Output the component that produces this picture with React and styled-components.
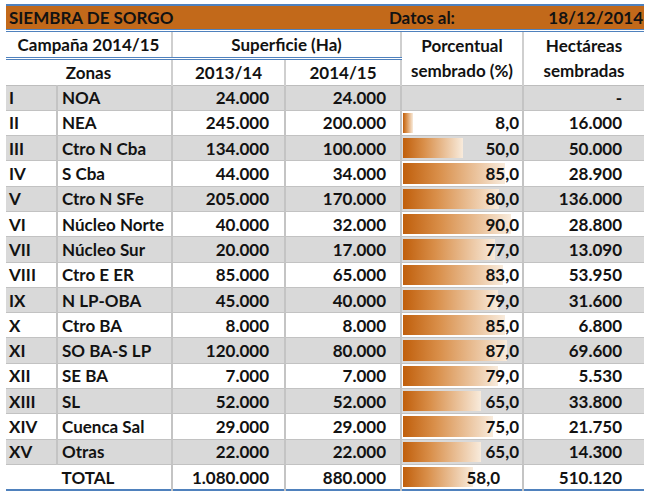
import React from 'react'
import styled, { createGlobalStyle } from 'styled-components'

const Global = createGlobalStyle`
body{
  margin:0;
  background:#fff;
  font-family:Lato, "Open Sans", sans-serif;
}
`

const rows = [
  ['I', 'NOA', '24.000', '24.000', null, '-'],
  ['II', 'NEA', '245.000', '200.000', 8, '16.000'],
  ['III', 'Ctro N Cba', '134.000', '100.000', 50, '50.000'],
  ['IV', 'S Cba', '44.000', '34.000', 85, '28.900'],
  ['V', 'Ctro N SFe', '205.000', '170.000', 80, '136.000'],
  ['VI', 'Núcleo Norte', '40.000', '32.000', 90, '28.800'],
  ['VII', 'Núcleo Sur', '20.000', '17.000', 77, '13.090'],
  ['VIII', 'Ctro E ER', '85.000', '65.000', 83, '53.950'],
  ['IX', 'N LP-OBA', '45.000', '40.000', 79, '31.600'],
  ['X', 'Ctro BA', '8.000', '8.000', 85, '6.800'],
  ['XI', 'SO BA-S LP', '120.000', '80.000', 87, '69.600'],
  ['XII', 'SE BA', '7.000', '7.000', 79, '5.530'],
  ['XIII', 'SL', '52.000', '52.000', 65, '33.800'],
  ['XIV', 'Cuenca Sal', '29.000', '29.000', 75, '21.750'],
  ['XV', 'Otras', '22.000', '22.000', 65, '14.300'],
]

const Wrap = styled.div`
  padding:4px 6px 0 6px;
`

const Table = styled.table`
  width:638px;
  table-layout:fixed;
  border-collapse:collapse;
  border-top:2px solid #4f81bd;
  border-bottom:2px solid #4f81bd;
  font-weight:700;
  font-size:17px;
  color:#121212;
`

const TitleRow = styled.tr`
  background:#c2691a;
  height:25px;
  border-bottom:3px double #4f81bd;
`

const TitleCell = styled.td`
  padding:0 ${p => p.$pr || '3px'} 0 3px;
  text-align:${p => (p.$right ? 'right' : 'left')};
  white-space:nowrap;
`

const HeadCell = styled.th`
  font-weight:700;
  text-align:center;
  line-height:25px;
  height:${p => (p.$tall ? '52px' : '25px')};
  padding:0;
  border-left:2px solid #cfcfcf;
  border-bottom:${p => (p.$double ? '3px double #4f81bd' : '1px solid #bdbdbd')};
  &:first-child{border-left:none;}
`

const DataRow = styled.tr`
  background:${p => (p.$alt ? '#d9d9d9' : '#fff')};
  border-bottom:1px solid #c2c2c2;
`

const Cell = styled.td`
  height:24.3px;
  padding:0 ${p => p.$pr || '4px'} 0 ${p => p.$pl || '3px'};
  text-align:${p => p.$align || 'left'};
  border-left:2px solid #c4c4c4;
  white-space:nowrap;
  &:first-child{border-left:none;}
`

const BarCell = styled.td`
  position:relative;
  height:24.3px;
  padding:0 ${p => p.$pr || '3px'} 0 0;
  text-align:right;
  border-left:2px solid #c4c4c4;
`

const Bar = styled.div`
  position:absolute;
  left:1px;
  top:2px;
  bottom:2px;
  background:linear-gradient(to right, #c05f0c 0%, #d98f4a 35%, #f8ebdc 100%);
`

const BarValue = styled.span`
  position:relative;
`

export default function App() {
  return (
    <Wrap>
      <Global />
      <Table>
        <colgroup>
          <col style={{ width: 51 }} />
          <col style={{ width: 115 }} />
          <col style={{ width: 113 }} />
          <col style={{ width: 116 }} />
          <col style={{ width: 122 }} />
          <col style={{ width: 121 }} />
        </colgroup>
        <tbody>
          <TitleRow>
            <TitleCell colSpan={3}>SIEMBRA DE SORGO</TitleCell>
            <TitleCell colSpan={2} $right $pr="68px">Datos al:</TitleCell>
            <TitleCell $right $pr="1px">18/12/2014</TitleCell>
          </TitleRow>
          <tr>
            <HeadCell colSpan={2} $double>Campaña 2014/15</HeadCell>
            <HeadCell colSpan={2} $double>Superficie (Ha)</HeadCell>
            <HeadCell rowSpan={2} $tall>Porcentual<br />sembrado (%)</HeadCell>
            <HeadCell rowSpan={2} $tall>Hectáreas<br />sembradas</HeadCell>
          </tr>
          <tr>
            <HeadCell colSpan={2} style={{ borderLeft: 'none' }}>Zonas</HeadCell>
            <HeadCell>2013/14</HeadCell>
            <HeadCell>2014/15</HeadCell>
          </tr>
          {rows.map((r, i) => (
            <DataRow key={r[0]} $alt={i % 2 === 0}>
              <Cell>{r[0]}</Cell>
              <Cell $pl="4px">{r[1]}</Cell>
              <Cell $align="right" $pr="15px">{r[2]}</Cell>
              <Cell $align="right" $pr="14px">{r[3]}</Cell>
              <BarCell>
                {r[4] !== null && <Bar style={{ width: `${r[4] * 1.2}px` }} />}
                {r[4] !== null && <BarValue>{r[4]},0</BarValue>}
              </BarCell>
              <Cell $align="right" $pr="22px">{r[5]}</Cell>
            </DataRow>
          ))}
          <DataRow>
            <Cell colSpan={2} $align="center">TOTAL</Cell>
            <Cell $align="right" $pr="15px">1.080.000</Cell>
            <Cell $align="right" $pr="14px">880.000</Cell>
            <BarCell $pr="22px">
              <Bar style={{ width: `${58 * 1.2}px` }} />
              <BarValue>58,0</BarValue>
            </BarCell>
            <Cell $align="right" $pr="22px">510.120</Cell>
          </DataRow>
        </tbody>
      </Table>
    </Wrap>
  )
}
